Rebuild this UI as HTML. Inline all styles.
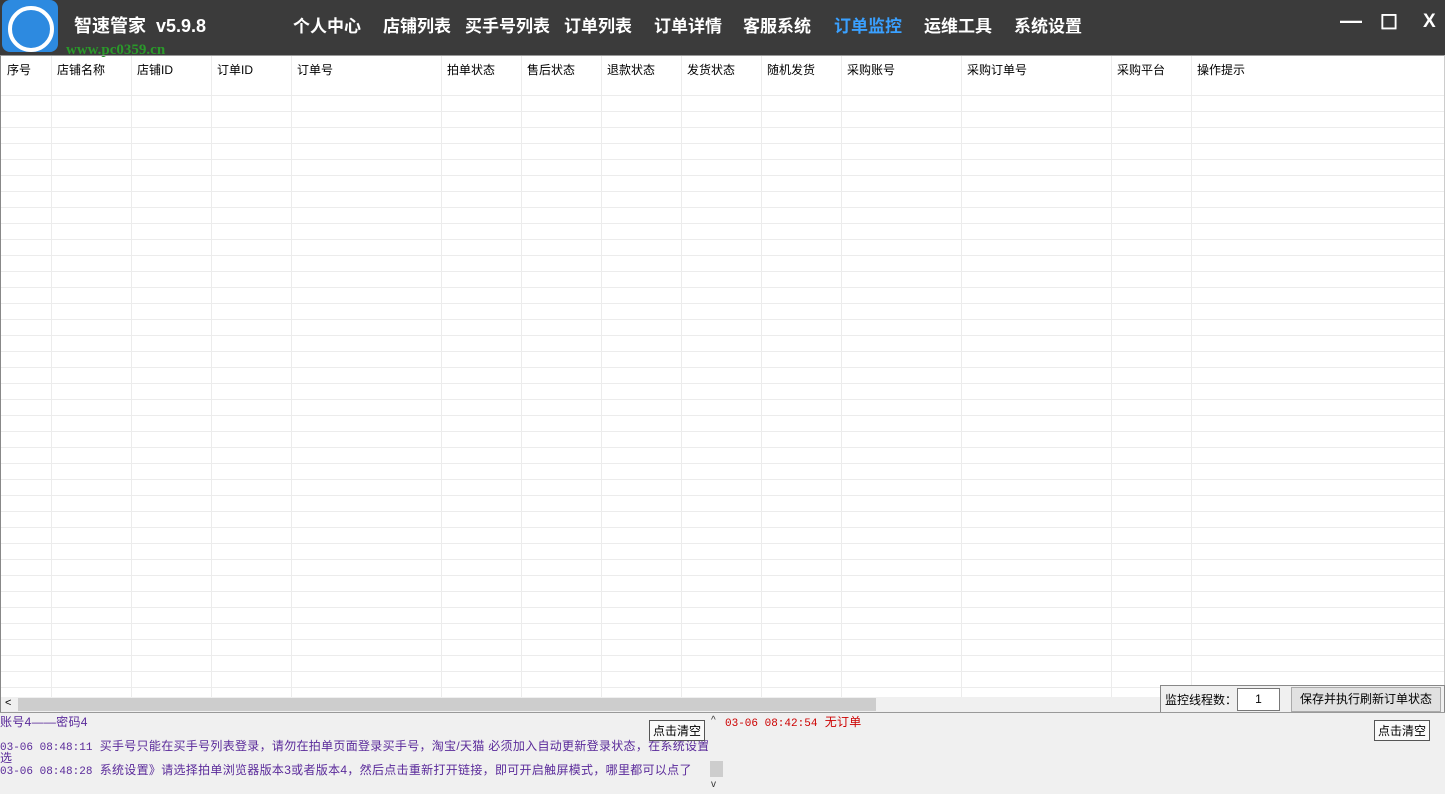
<!DOCTYPE html><html><head><meta charset="utf-8"><style>
body{margin:0;width:1445px;height:793px;overflow:hidden;font-family:"Liberation Sans","Noto Sans CJK SC",sans-serif;background:#fff;position:relative}
.hd{position:absolute;left:0;top:0;width:1445px;height:55px;background:#3b3b3b;color:#fff}
.hd span{position:absolute;top:12px;font-size:17px;font-weight:bold}
.grid{position:absolute;left:0;top:55px;width:1443px;height:642px;border-left:1px solid #888;border-right:1px solid #ccc;border-top:1px solid #999;}
.grid .rows{position:absolute;left:0;right:0;top:39px;bottom:0;background:repeating-linear-gradient(to bottom,#ececec 0 1px,transparent 1px 16px)}
.c{position:absolute;top:0;bottom:0;border-left:1px solid #ececec}
.h{position:absolute;top:5px;font-size:12px;color:#000}
.sb{position:absolute;left:0;top:697px;width:1160px;height:15px;background:#f0f0f0;border-left:1px solid #888}
.bot{position:absolute;left:0;top:712px;width:1445px;height:81px;background:#f0f0f0;border-top:1px solid #999}
.btn{position:absolute;border:1px solid #555;background:#fafafa;font-size:12px;padding:1px 3px}
.lp{position:absolute;left:0;top:0;width:708px;height:81px;overflow:hidden}
.log{position:absolute;font-size:12px;color:#5a2a9a;white-space:nowrap;letter-spacing:0.3px}
.log b{font-weight:normal;font-family:"Liberation Mono",monospace;font-size:11px;letter-spacing:0}
</style></head><body>
<div class="hd">
<div style="position:absolute;left:2px;top:0;width:56px;height:52px;background:#2d8ae0;border-radius:8px"><div style="position:absolute;left:6px;top:6px;width:38px;height:38px;border:4px solid #fff;border-radius:50%"></div></div>
<span style="left:74px;font-size:18px">智速管家 &nbsp;v5.9.8</span>
<span style="left:293px">个人中心</span><span style="left:383px">店铺列表</span><span style="left:465px">买手号列表</span><span style="left:564px">订单列表</span><span style="left:654px">订单详情</span><span style="left:743px">客服系统</span><span style="left:834px;color:#3aa0ff">订单监控</span><span style="left:924px">运维工具</span><span style="left:1014px">系统设置</span>
<span style="left:1340px;font-size:22px;top:8px">—</span><span style="left:1380px;font-size:20px;top:10px">☐</span><span style="left:1423px;font-size:19px;top:11px">X</span>
<div style="position:absolute;left:66px;top:42px;color:#2a9a2a;font-size:15px;font-weight:bold;font-family:'Liberation Serif',serif">www.pc0359.cn</div>
</div>
<div class="grid"><div class="rows"></div>
<div class="c" style="left:50px"></div><div class="c" style="left:130px"></div><div class="c" style="left:210px"></div><div class="c" style="left:290px"></div><div class="c" style="left:440px"></div><div class="c" style="left:520px"></div><div class="c" style="left:600px"></div><div class="c" style="left:680px"></div><div class="c" style="left:760px"></div><div class="c" style="left:840px"></div><div class="c" style="left:960px"></div><div class="c" style="left:1110px"></div><div class="c" style="left:1190px"></div>
<div class="h" style="left:6px">序号</div><div class="h" style="left:56px">店铺名称</div><div class="h" style="left:136px">店铺ID</div><div class="h" style="left:216px">订单ID</div><div class="h" style="left:296px">订单号</div><div class="h" style="left:446px">拍单状态</div><div class="h" style="left:526px">售后状态</div><div class="h" style="left:606px">退款状态</div><div class="h" style="left:686px">发货状态</div><div class="h" style="left:766px">随机发货</div><div class="h" style="left:846px">采购账号</div><div class="h" style="left:966px">采购订单号</div><div class="h" style="left:1116px">采购平台</div><div class="h" style="left:1196px">操作提示</div>
</div>
<div class="sb"><span style="position:absolute;left:4px;top:0;font-size:11px">&lt;</span><div style="position:absolute;left:17px;top:1px;width:858px;height:13px;background:#cdcdcd"></div></div>
<div style="position:absolute;left:1160px;top:685px;width:283px;height:27px;background:#f0f0f0;border:1px solid #888;border-bottom:none">
<span style="position:absolute;left:4px;top:5px;font-size:12px">监控线程数：</span>
<div style="position:absolute;left:76px;top:2px;width:41px;height:21px;border:1px solid #777;background:#fff;font-size:12px;text-align:center;line-height:21px">1</div>
<div style="position:absolute;left:130px;top:1px;width:148px;height:23px;border:1px solid #aaa;background:#e1e1e1;font-size:12px;text-align:center;line-height:23px">保存并执行刷新订单状态</div></div>
<div class="bot">
<div class="lp">
<div class="log" style="left:0;top:0">账号4——密码4</div>
<div class="log" style="left:0;top:24px"><b>03-06 08:48:11</b> &nbsp;买手号只能在买手号列表登录，请勿在拍单页面登录买手号，淘宝/天猫 必须加入自动更新登录状态，在系统设置可</div>
<div class="log" style="left:0;top:36px">选</div>
<div class="log" style="left:0;top:48px"><b>03-06 08:48:28</b> &nbsp;系统设置》请选择拍单浏览器版本3或者版本4，然后点击重新打开链接，即可开启触屏模式，哪里都可以点了</div>
</div>
<div class="btn" style="left:649px;top:7px">点击清空</div>
<div style="position:absolute;left:709px;top:0;width:14px;height:81px;background:#f0f0f0;font-size:10px;color:#333"><div style="position:absolute;left:2px;top:2px">^</div><div style="position:absolute;left:1px;top:48px;width:13px;height:16px;background:#cdcdcd"></div><div style="position:absolute;left:2px;top:66px">v</div></div>
<div class="log" style="left:725px;top:0;color:#c00"><b>03-06 08:42:54</b> &nbsp;无订单</div>
<div class="btn" style="left:1374px;top:7px">点击清空</div>
</div>
</body></html>
